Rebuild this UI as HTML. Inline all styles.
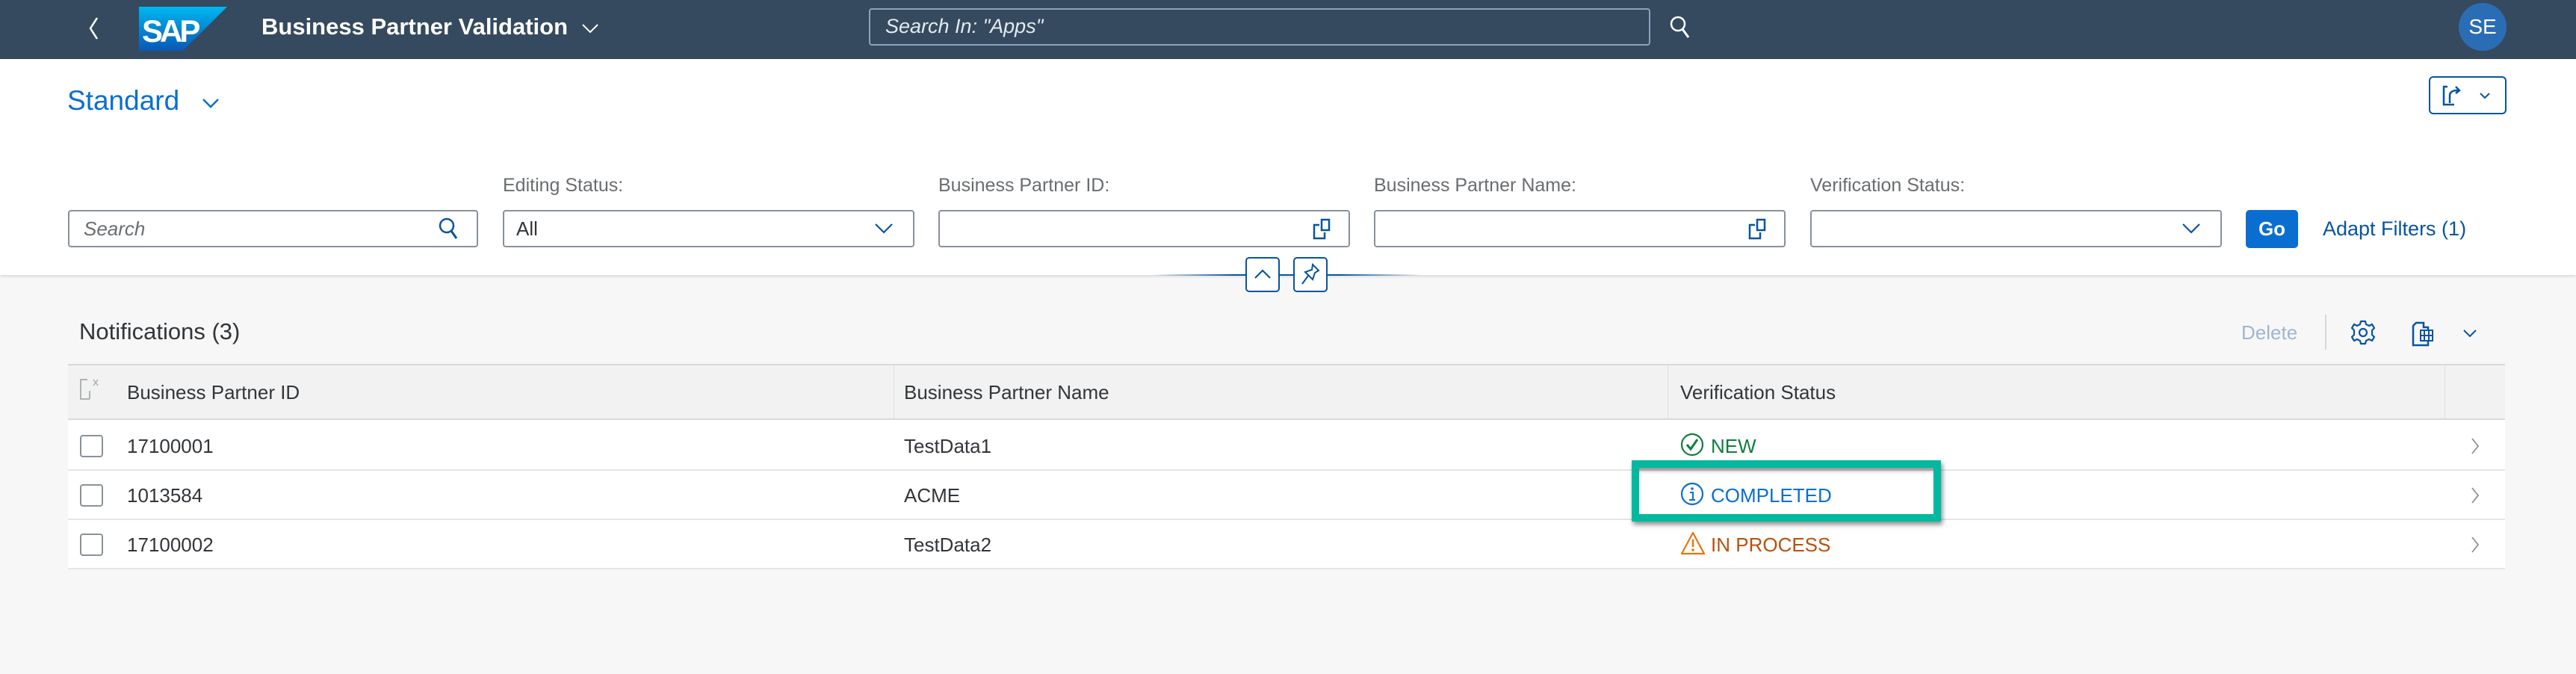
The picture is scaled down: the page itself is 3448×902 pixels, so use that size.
<!DOCTYPE html>
<html><head><meta charset="utf-8"><style>
*{box-sizing:border-box;margin:0;padding:0}
body{width:3448px;height:902px;overflow:hidden;background:#f7f7f7;font-family:"Liberation Sans",Arial,sans-serif;position:relative}
.abs{position:absolute}
.hdr{left:0;top:0;width:3448px;height:79px;background:#354a5f}
.top{left:0;top:79px;width:3448px;height:289px;background:#fff;box-shadow:0 2px 4px rgba(0,0,0,.12)}
.lbl{font-size:25px;color:#6a6d70;top:234px}
.inp{top:281px;height:50px;border:2px solid #89919a;border-radius:4px;background:#fff}
.tx{font-size:26px;color:#32363a}
.row{left:91px;width:3262px;background:#fff;border-bottom:2px solid #e5e5e5}
.cb{width:31px;height:30px;border:2px solid #89919a;border-radius:4px;background:#fff}
</style></head><body>
<div class="abs hdr"></div>
<svg class="abs" style="left:112px;top:20px" width="26" height="36"><path d="M18 4 L9 18 L18 32" fill="none" stroke="#fff" stroke-width="2.5"/></svg>
<svg class="abs" style="left:186px;top:9px" width="118" height="59"><defs><linearGradient id="g" x1="0" y1="0" x2="0" y2="1"><stop offset="0" stop-color="#00b8f1"/><stop offset="1" stop-color="#0a57b5"/></linearGradient></defs><path d="M0 0H118L59 59H0Z" fill="url(#g)"/><text x="4" y="47" font-family="Liberation Sans" font-weight="bold" font-size="42" fill="#fff" letter-spacing="-4">SAP</text></svg>
<div class="abs" style="left:350px;top:18px;font-size:31px;font-weight:bold;color:#fff">Business Partner Validation</div>
<svg class="abs" style="left:777px;top:28px" width="26" height="20"><path d="M3 5 L13 15 L23 5" fill="none" stroke="#fff" stroke-width="2"/></svg>
<div class="abs" style="left:1163px;top:11px;width:1046px;height:50px;border:2px solid #8aa3bd;border-radius:4px"></div>
<div class="abs" style="left:1185px;top:20px;font-size:27px;font-style:italic;color:#e4eaf0">Search In: "Apps"</div>
<svg class="abs" style="left:2233px;top:19px" width="32" height="36"><circle cx="13" cy="13" r="9" fill="none" stroke="#fff" stroke-width="2.5"/><path d="M19 20 L27 31" stroke="#fff" stroke-width="3"/></svg>
<div class="abs" style="left:3291px;top:4px;width:64px;height:64px;border-radius:50%;background:#2b6db5;color:#fff;font-size:28px;text-align:center;line-height:64px">SE</div>

<div class="abs top"></div>
<div class="abs" style="left:90px;top:114px;font-size:37px;color:#0a6ed1">Standard</div>
<svg class="abs" style="left:268px;top:128px" width="28" height="20"><path d="M4 5 L14 15 L24 5" fill="none" stroke="#0a6ed1" stroke-width="2.5"/></svg>
<div class="abs" style="left:3251px;top:102px;width:104px;height:51px;border:2px solid #0854a0;border-radius:6px;background:#fff"></div>
<svg class="abs" style="left:3265px;top:110px" width="80" height="36"><path d="M11 6 H6 V30 H20" fill="none" stroke="#0854a0" stroke-width="2.5"/><path d="M14 28 V18 Q14 12 22 11 L26 11 M22 6 L27 11 L22 15" fill="none" stroke="#0854a0" stroke-width="2.5"/><path d="M55 15 L61 21 L67 15" fill="none" stroke="#0854a0" stroke-width="2"/></svg>

<div class="abs lbl" style="left:673px">Editing Status:</div>
<div class="abs lbl" style="left:1256px">Business Partner ID:</div>
<div class="abs lbl" style="left:1839px">Business Partner Name:</div>
<div class="abs lbl" style="left:2423px">Verification Status:</div>

<div class="abs inp" style="left:91px;width:549px"></div>
<div class="abs" style="left:112px;top:291px;font-size:26px;font-style:italic;color:#6a6d70">Search</div>
<svg class="abs" style="left:585px;top:289px" width="32" height="36"><circle cx="13" cy="13" r="9" fill="none" stroke="#0854a0" stroke-width="2.5"/><path d="M19 20 L26 30" stroke="#0854a0" stroke-width="3"/></svg>
<div class="abs inp" style="left:673px;width:551px"></div>
<div class="abs tx" style="left:691px;top:291px">All</div>
<svg class="abs" style="left:1168px;top:294px" width="30" height="24"><path d="M4 6 L15 17 L26 6" fill="none" stroke="#0854a0" stroke-width="2.2"/></svg>
<div class="abs inp" style="left:1256px;width:551px"></div>
<svg class="abs" style="left:1755px;top:291px" width="30" height="32"><rect x="14" y="3" width="10" height="14" fill="none" stroke="#0854a0" stroke-width="2.5"/><path d="M11 10 H4 V28 H18 V20" fill="none" stroke="#0854a0" stroke-width="2.5"/></svg>
<div class="abs inp" style="left:1839px;width:551px"></div>
<svg class="abs" style="left:2338px;top:291px" width="30" height="32"><rect x="14" y="3" width="10" height="14" fill="none" stroke="#0854a0" stroke-width="2.5"/><path d="M11 10 H4 V28 H18 V20" fill="none" stroke="#0854a0" stroke-width="2.5"/></svg>
<div class="abs inp" style="left:2423px;width:551px"></div>
<svg class="abs" style="left:2918px;top:294px" width="30" height="24"><path d="M4 6 L15 17 L26 6" fill="none" stroke="#0854a0" stroke-width="2.2"/></svg>
<div class="abs" style="left:3006px;top:281px;width:70px;height:51px;background:#0a6ed1;border-radius:5px;color:#fff;font-weight:bold;font-size:26px;text-align:center;line-height:51px">Go</div>
<div class="abs" style="left:3109px;top:291px;font-size:27px;color:#0854a0">Adapt Filters (1)</div>

<div class="abs" style="left:1543px;top:367px;width:358px;height:2px;background:linear-gradient(90deg,rgba(8,84,160,0),#0854a0 30%,#0854a0 70%,rgba(8,84,160,0))"></div>
<div class="abs" style="left:1667px;top:344px;width:46px;height:47px;border:2px solid #0854a0;border-radius:5px;background:#fff"></div>
<svg class="abs" style="left:1667px;top:344px" width="46" height="47"><path d="M13 28 L23 18 L33 28" fill="none" stroke="#0854a0" stroke-width="2.2"/></svg>
<div class="abs" style="left:1731px;top:344px;width:46px;height:47px;border:2px solid #0854a0;border-radius:5px;background:#fff"></div>
<svg class="abs" style="left:1731px;top:344px" width="46" height="47"><path d="M26 10 L34 18 L29 21 L26 30 L16 20 L25 17 Z M20 25 L12 36" fill="none" stroke="#0854a0" stroke-width="2"/></svg>

<div class="abs" style="left:106px;top:426px;font-size:31px;color:#32363a">Notifications (3)</div>
<div class="abs" style="left:3000px;top:430px;font-size:26px;color:#9fb6d0">Delete</div>
<div class="abs" style="left:3112px;top:421px;width:2px;height:47px;background:#d9d9d9"></div>
<svg class="abs" style="left:3146px;top:426px" width="34" height="38"><circle cx="17" cy="19" r="5" fill="none" stroke="#0854a0" stroke-width="2.2"/><path d="M14 4 H20 L21 8 L25 10 L29 8 L32 13 L29 16 V22 L32 25 L29 30 L25 28 L21 30 L20 34 H14 L13 30 L9 28 L5 30 L2 25 L5 22 V16 L2 13 L5 8 L9 10 L13 8 Z" fill="none" stroke="#0854a0" stroke-width="2.2" stroke-linejoin="round"/></svg>
<svg class="abs" style="left:3226px;top:428px" width="34" height="36"><path d="M8 4 H18 V10 H24 V34 H4 V8 Z" fill="none" stroke="#0854a0" stroke-width="2.5"/><rect x="14" y="14" width="16" height="14" fill="#fff" stroke="#0854a0" stroke-width="2"/><path d="M14 21 H30 M19 14 V28 M25 14 V28" stroke="#0854a0" stroke-width="2"/></svg>
<svg class="abs" style="left:3294px;top:436px" width="24" height="20"><path d="M4 6 L12 14 L20 6" fill="none" stroke="#0854a0" stroke-width="2"/></svg>

<div class="abs" style="left:91px;top:487px;width:3262px;height:75px;background:#f2f2f2;border-top:2px solid #d9d9d9;border-bottom:2px solid #d9d9d9"></div>
<div class="abs" style="left:1196px;top:489px;width:1px;height:71px;background:#e0e0e0"></div>
<div class="abs" style="left:2232px;top:489px;width:1px;height:71px;background:#e0e0e0"></div>
<div class="abs" style="left:3272px;top:489px;width:1px;height:71px;background:#e0e0e0"></div>
<svg class="abs" style="left:105px;top:505px" width="36" height="32"><path d="M12 3 H3 V29 H15 M15 18 V29" fill="none" stroke="#b0b3b6" stroke-width="2"/><path d="M20 3 L26 11 M26 3 L20 11" stroke="#b0b3b6" stroke-width="1.5"/></svg>
<div class="abs tx" style="left:170px;top:510px">Business Partner ID</div>
<div class="abs tx" style="left:1210px;top:510px">Business Partner Name</div>
<div class="abs tx" style="left:2249px;top:510px">Verification Status</div>

<div class="abs row" style="top:562px;height:68px"></div>
<div class="abs row" style="top:630px;height:66px"></div>
<div class="abs row" style="top:696px;height:66px"></div>

<div class="abs cb" style="left:107px;top:582px"></div>
<div class="abs cb" style="left:107px;top:648px"></div>
<div class="abs cb" style="left:107px;top:714px"></div>
<div class="abs tx" style="left:170px;top:582px">17100001</div>
<div class="abs tx" style="left:170px;top:648px">1013584</div>
<div class="abs tx" style="left:170px;top:714px">17100002</div>
<div class="abs tx" style="left:1210px;top:582px">TestData1</div>
<div class="abs tx" style="left:1210px;top:648px">ACME</div>
<div class="abs tx" style="left:1210px;top:714px">TestData2</div>

<svg class="abs" style="left:2249px;top:578px" width="34" height="34"><circle cx="16" cy="17" r="14" fill="none" stroke="#107e3e" stroke-width="2.2"/><path d="M9 17 L14 23 L23 10" fill="none" stroke="#107e3e" stroke-width="3"/></svg>
<div class="abs" style="left:2290px;top:582px;font-size:26px;color:#107e3e">NEW</div>
<svg class="abs" style="left:2249px;top:644px" width="34" height="34"><circle cx="16" cy="17" r="14" fill="none" stroke="#0a6ed1" stroke-width="2.2"/><circle cx="16" cy="10" r="1.8" fill="#0a6ed1"/><path d="M13 15 H17 V25 M12 25 H20" fill="none" stroke="#0a6ed1" stroke-width="2"/></svg>
<div class="abs" style="left:2290px;top:648px;font-size:26px;color:#0a6ed1">COMPLETED</div>
<svg class="abs" style="left:2248px;top:710px" width="36" height="34"><path d="M18 3 L33 31 H3 Z" fill="none" stroke="#e9730c" stroke-width="2.2" stroke-linejoin="round"/><path d="M18 12 V22" stroke="#e9730c" stroke-width="2.5"/><circle cx="18" cy="26" r="1.8" fill="#e9730c"/></svg>
<div class="abs" style="left:2290px;top:714px;font-size:26px;color:#b9500b">IN PROCESS</div>

<svg class="abs" style="left:3304px;top:583px" width="18" height="28"><path d="M5 4 L13 14 L5 24" fill="none" stroke="#89919a" stroke-width="1.8"/></svg>
<svg class="abs" style="left:3304px;top:649px" width="18" height="28"><path d="M5 4 L13 14 L5 24" fill="none" stroke="#89919a" stroke-width="1.8"/></svg>
<svg class="abs" style="left:3304px;top:715px" width="18" height="28"><path d="M5 4 L13 14 L5 24" fill="none" stroke="#89919a" stroke-width="1.8"/></svg>

<div class="abs" style="left:2184px;top:616px;width:414px;height:82px;border:10px solid #00b9a0;box-shadow:2px 4px 6px rgba(0,0,0,.45), inset 0 6px 6px -3px rgba(0,0,0,.5)"></div>
</body></html>
